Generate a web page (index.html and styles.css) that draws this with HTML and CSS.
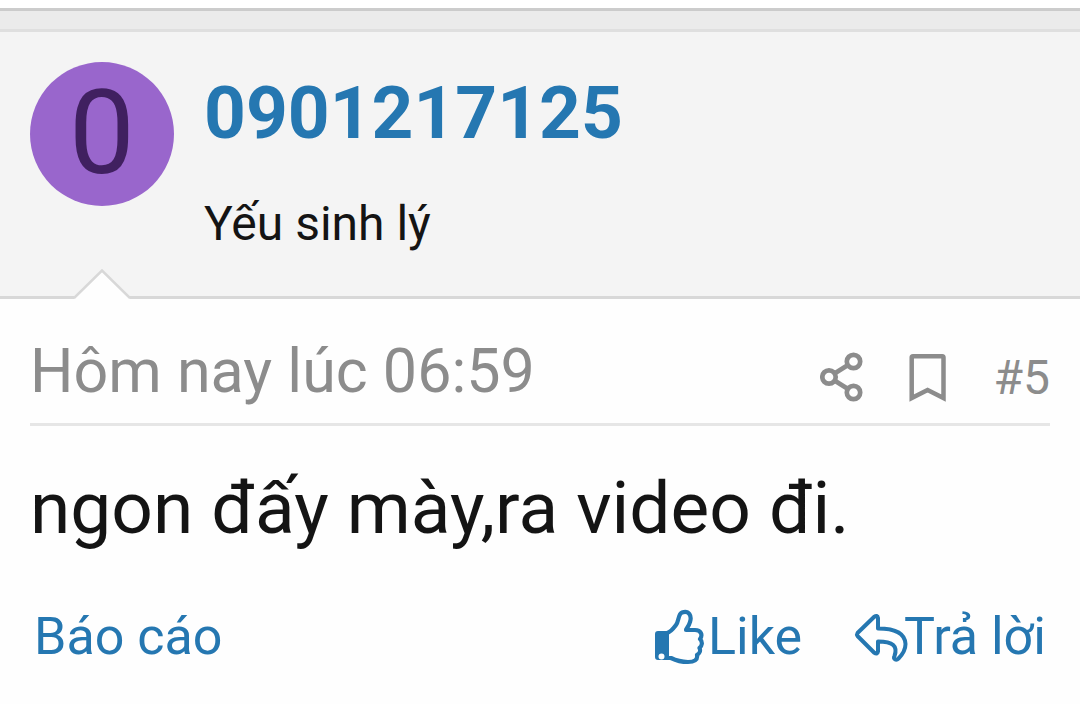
FILE: index.html
```html
<!DOCTYPE html>
<html lang="vi">
<head>
<meta charset="utf-8">
<meta name="viewport" content="width=device-width, initial-scale=1">
<title>0901217125</title>
<link rel="stylesheet" href="styles.css">
</head>
<body>
<div class="post-gap"></div>
<article class="post">
  <header class="user">
    <a class="avatar" href="#profile">0</a>
    <div class="user-info">
      <h1 class="user-name"><a href="#profile">0901217125</a></h1>
      <p class="user-title">Yếu sinh lý</p>
    </div>
    <svg class="pointer" viewBox="0 0 56 30" aria-hidden="true">
      <path d="M0 30 L28 2 L56 30Z" fill="#fefefe"/>
      <path d="M0 29 L28 1.500 L56 29" fill="none" stroke="#d8d8d8" stroke-width="2.500"/>
    </svg>
  </header>
  <div class="post-body">
    <div class="meta">
      <a class="date" href="#post-5"><time>Hôm nay lúc 06:59</time></a>
      <div class="tools">
        <a href="#share" aria-label="Share">
          <svg class="icon-share" viewBox="0 1 43 52" fill="none" stroke="#8c8c8c" stroke-width="4.700">
            <circle cx="33.500" cy="10.500" r="6.700"/>
            <circle cx="9" cy="26" r="6.700"/>
            <circle cx="33.500" cy="41.500" r="6.700"/>
            <path d="M14.500 22.500 L28 14 M14.500 29.500 L28 38"/>
          </svg>
        </a>
        <a href="#bookmark" aria-label="Bookmark">
          <svg class="icon-bookmark" viewBox="0 1 40 52" fill="none" stroke="#8c8c8c" stroke-width="4.500">
            <path d="M3.700 47 V6.500 Q3.700 5.200 5 5.200 H34.200 Q35.500 5.200 35.500 6.500 V47 L19.600 39Z"/>
          </svg>
        </a>
        <a class="number" href="#post-5">#5</a>
      </div>
    </div>
    <p class="message">ngon đấy mày,ra video đi.</p>
    <footer class="actions">
      <a class="report" href="#report">Báo cáo</a>
      <a class="action" href="#like">
        <svg class="icon-like" viewBox="0 0 53 56" aria-hidden="true">
          <path fill="#2577b1" fill-rule="evenodd" d="M3 22H14V51H3Q0 51 0 48V25Q0 22 3 22ZM6.500 44.500A3 3 0 1 0 6.500 50.500A3 3 0 1 0 6.500 44.500Z"/>
          <path fill="none" stroke="#2577b1" stroke-width="4.200" stroke-linejoin="round" stroke-linecap="round" d="M12 24C16 23 18 20 21 16C24 12 23 5 27 3.500C34 1 37 7 35 13C34 17 31 20 31 21H40C46 21 48 26 45 30C48 33 47 37 44.500 39C46 42 44 45 42 46C43 51 39 53 33 53C25 53 20 51 16 49H12"/>
        </svg><span>Like</span>
      </a>
      <a class="action" href="#reply">
        <svg class="icon-reply" viewBox="0 0 49 56" aria-hidden="true">
          <path fill="none" stroke="#2577b1" stroke-width="4" stroke-linejoin="round" d="M2.500 27Q1.500 25.500 2.500 24L19 8Q22.500 5.500 23 9V19.500C39 19.500 50 23.500 50.500 35C50.500 41 47 46 43.500 49.500C41 52 38 50 39.500 47C43 37 38 32.500 23 32.500V42.500Q22.500 46 19 43.500Z"/>
        </svg><span>Trả lời</span>
      </a>
    </footer>
  </div>
</article>
</body>
</html>
```
FILE: styles.css
```css
* {
  box-sizing: border-box;
}

body {
  margin: 0;
  background: #fefefe;
  color: #141414;
  font-family: Roboto, "Noto Sans", sans-serif;
}

a {
  color: inherit;
  text-decoration: none;
}

svg {
  display: block;
  flex: none;
}

h1,
p {
  margin: 0;
}

.post-gap {
  height: 21px;
  margin-top: 8px;
  border-top: 3px solid #cbcbcb;
  background: #ebebeb;
}

.user {
  position: relative;
  display: flex;
  gap: 30px;
  padding: 30px 30px 39px;
  border-top: 3px solid #dfdfdf;
  border-bottom: 3px solid #d8d8d8;
  background: #f4f4f4;
}

.avatar {
  flex: none;
  width: 144px;
  height: 144px;
  border-radius: 50%;
  background: #9966cc;
  color: #402060;
  font-size: 117px;
  line-height: 142px;
  text-align: center;
}

.user-info {
  padding-top: 6px;
}

.user-name {
  margin-bottom: 33px;
  color: #2577b1;
  font-size: 73px;
  font-weight: 700;
  line-height: 90px;
}

.user-title {
  font-size: 48px;
  line-height: 66px;
}

.pointer {
  position: absolute;
  bottom: -3px;
  left: 74px;
  width: 56px;
  height: 30px;
}

.post-body {
  padding: 0 30px 30px;
}

.meta {
  display: flex;
  justify-content: space-between;
  padding: 36px 0 14px;
  border-bottom: 3px solid #e6e6e6;
  color: #8c8c8c;
}

.date {
  font-size: 61px;
  line-height: 72px;
}

.tools {
  display: flex;
  align-items: center;
  gap: 45px;
  padding-top: 12px;
  font-size: 48px;
  line-height: 62px;
}

.icon-share {
  width: 43px;
  height: 52px;
}

.icon-bookmark {
  width: 40px;
  height: 52px;
}

.message {
  padding-top: 30px;
  font-size: 73px;
  line-height: 104px;
}

.actions {
  display: flex;
  align-items: center;
  gap: 53px;
  padding: 0 4px;
  margin-top: 42px;
  color: #2577b1;
  font-size: 52px;
  line-height: 70px;
}

.report {
  margin-right: auto;
}

.action {
  display: flex;
  align-items: center;
}

.icon-like {
  width: 53px;
  height: 56px;
}

.icon-reply {
  width: 49px;
  height: 56px;
  overflow: visible;
}
```
